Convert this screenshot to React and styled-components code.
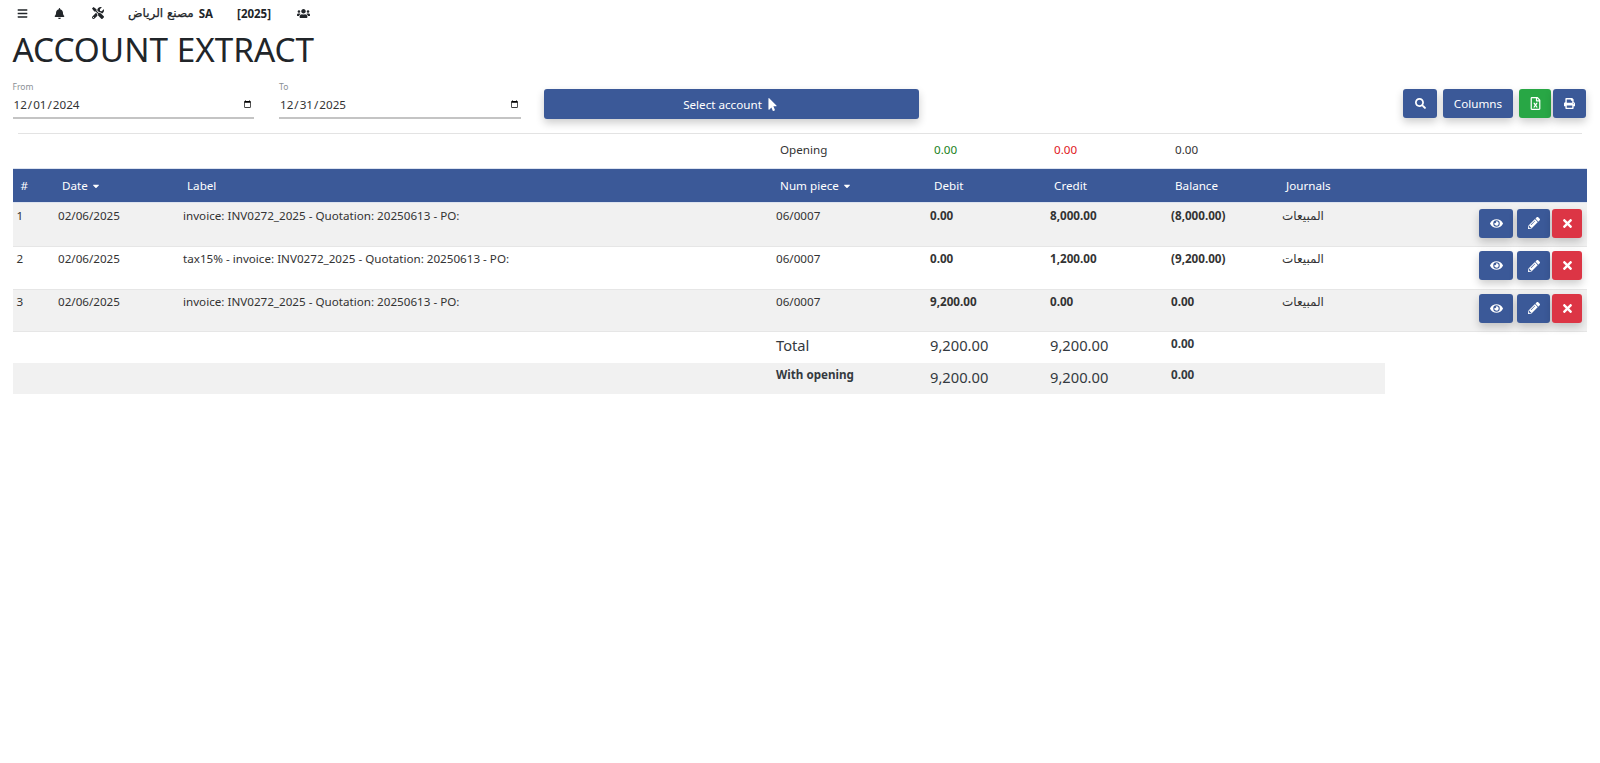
import styled, { createGlobalStyle } from 'styled-components'
import { FaBars, FaBell, FaTools, FaUsers, FaMousePointer, FaSearch, FaRegFileExcel, FaPrint, FaEye, FaPencilAlt, FaTimes, FaCaretDown } from 'react-icons/fa'

const rows = [
  { id: 1, label: 'invoice: INV0272_2025 - Quotation: 20250613 - PO:', debit: '0.00', credit: '8,000.00', balance: '(8,000.00)' },
  { id: 2, label: 'tax15% - invoice: INV0272_2025 - Quotation: 20250613 - PO:', debit: '0.00', credit: '1,200.00', balance: '(9,200.00)' },
  { id: 3, label: 'invoice: INV0272_2025 - Quotation: 20250613 - PO:', debit: '9,200.00', credit: '0.00', balance: '0.00' },
]

const widths = [41.5, 125, 593, 154, 120, 121, 111, 107, 202]

const GlobalStyle = createGlobalStyle`
  html, body { margin: 0; padding: 0; background: #fff; }
  body { font-family: "Noto Sans", "DejaVu Sans", sans-serif; font-size: 11.65px; color: #212529; }
`

const Page = styled.div`
  padding: 0 13px 0 12.5px;
  width: 1600px;
  box-sizing: border-box;
`

const NavBar = styled.nav`
  display: flex;
  align-items: center;
  height: 26px;
  color: #212529;
  font-weight: 700;
`

const NavItem = styled.span`
  display: flex;
  align-items: center;
  margin-left: ${(p) => p.$left}px;
  font-size: ${(p) => p.$size || 11.5}px;
`

const ArabicName = styled.span`
  font-family: "DejaVu Sans", sans-serif;
  font-size: 12px;
  font-weight: 400;
  -webkit-text-stroke: 0.25px #212529;
  margin-right: 5px;
`

const Title = styled.h1`
  margin: 0;
  font-size: 33.3px;
  font-weight: 400;
  line-height: 46px;
  color: #212529;
`

const FilterBar = styled.div`
  display: flex;
  align-items: flex-start;
  height: 52px;
  margin-top: 9px;
`

const DateField = styled.label`
  display: flex;
  flex-direction: column;
  width: 241.5px;
  margin-right: 25px;
`

const DateLabel = styled.span`
  font-size: 8.5px;
  line-height: 12px;
  color: #8a8f94;
`

const DateInput = styled.input`
  border: 0;
  border-bottom: 2px solid #c4c4c4;
  padding: 0 2px 2px 0;
  height: 26px;
  width: 100%;
  box-sizing: border-box;
  font-family: "Noto Sans", sans-serif;
  font-size: 11.65px;
  color: #333;
  background: transparent;
  outline: none;
  &::-webkit-calendar-picker-indicator { margin: 0; padding: 0; width: 9px; height: 9px; }
`

const Button = styled.button`
  display: inline-flex;
  align-items: center;
  justify-content: center;
  gap: 4px;
  height: 29px;
  padding: 0;
  width: ${(p) => p.$width}px;
  margin-left: ${(p) => p.$left || 0}px;
  border: 0;
  border-radius: 3px;
  background: ${(p) => p.$color || '#3b5998'};
  color: #fff;
  font-family: "Noto Sans", sans-serif;
  font-size: 11.65px;
  font-weight: 400;
  box-shadow: 0 4px 8px rgba(0, 0, 0, 0.2);
`

const SelectButton = styled(Button)`
  margin: 8px 0 0 -2px;
  height: 30px;
`

const ToolGroup = styled.div`
  display: flex;
  margin: 8px 1px 0 auto;
`

const Rule = styled.hr`
  border: 0;
  border-top: 1px solid #e3e3e3;
  margin: 0 5px;
`

const Table = styled.table`
  border-collapse: collapse;
  table-layout: fixed;
  width: 1574.5px;
  font-size: 11.65px;
`

const OpenCell = styled.td`
  height: 34px;
  padding: 0 0 2px 8px;
  box-sizing: border-box;
  color: ${(p) => p.$color || '#333'};
`

const Head = styled.th`
  height: 33px;
  padding: 0 0 0 8px;
  background: #3b5998;
  color: #fff;
  font-weight: 400;
  text-align: left;
  border-top: 1px solid #dde3ef;
  border-bottom: 1px solid #dde3ef;
  svg { font-size: 10px; vertical-align: -1px; }
`

const Cell = styled.td`
  height: 42.7px;
  padding: 2px 4px 0;
  box-sizing: border-box;
  vertical-align: top;
  line-height: 20px;
  color: #333;
  font-weight: ${(p) => (p.$bold ? 700 : 400)};
`

const ArabicCell = styled(Cell)`
  font-family: "DejaVu Sans", sans-serif;
  font-size: 12px;
`

const Actions = styled.div`
  display: flex;
  justify-content: flex-end;
  gap: 4px;
  margin: 2px 1px 0 0;
`

const Row = styled.tr`
  background: ${(p) => (p.$shade ? '#f1f1f1' : '#fff')};
  border-bottom: 1px solid #e6e6e6;
  &:first-child td { height: 44.5px; padding-top: 3px; }
  &:first-child ${Actions} { margin-top: 3px; }
`

const CloseAction = styled(Button)`
  margin-left: -2px;
`

const FootRow = styled.tr`
  background: ${(p) => (p.$shade ? '#f1f1f1' : 'transparent')};
`

const FootCell = styled.td`
  height: 31px;
  padding: 0 4px ${(p) => (p.$small ? 0 : p.$low ? 3 : 5)}px;
  box-sizing: border-box;
  vertical-align: ${(p) => (p.$small ? 'top' : 'middle')};
  font-size: ${(p) => (p.$small ? '11.65px' : '14.7px')};
  font-weight: ${(p) => (p.$small ? 700 : 400)};
  line-height: ${(p) => (p.$small ? '24px' : '20px')};
  color: #343a40;
`

const Blank = styled.td`
  background: #fff;
`

function ActionButtons() {
  return (
    <Actions>
      <Button $width={34}><FaEye size={13} /></Button>
      <Button $width={33}><FaPencilAlt size={12} /></Button>
      <CloseAction $width={30} $color="#dc3545"><FaTimes size={13} /></CloseAction>
    </Actions>
  )
}

export default function App() {
  return (
    <Page>
      <GlobalStyle />
      <NavBar>
        <NavItem $left={4.5} $size={11}><FaBars /></NavItem>
        <NavItem $left={25.5} $size={11}><FaBell /></NavItem>
        <NavItem $left={27.5} $size={12}><FaTools /></NavItem>
        <NavItem $left={24}><ArabicName>مصنع الرياض</ArabicName>SA</NavItem>
        <NavItem $left={24}>[2025]</NavItem>
        <NavItem $left={26} $size={13}><FaUsers /></NavItem>
      </NavBar>
      <Title>ACCOUNT EXTRACT</Title>
      <FilterBar>
        <DateField>
          <DateLabel>From</DateLabel>
          <DateInput type="date" defaultValue="2024-12-01" />
        </DateField>
        <DateField>
          <DateLabel>To</DateLabel>
          <DateInput type="date" defaultValue="2025-12-31" />
        </DateField>
        <SelectButton $width={375}>Select account <FaMousePointer size={13} /></SelectButton>
        <ToolGroup>
          <Button $width={34}><FaSearch size={11} /></Button>
          <Button $width={70} $left={6}>Columns</Button>
          <Button $width={32} $left={6} $color="#28a745"><FaRegFileExcel size={13} /></Button>
          <Button $width={33} $left={2}><FaPrint size={11} /></Button>
        </ToolGroup>
      </FilterBar>
      <Rule />
      <Table>
        <colgroup>
          {widths.map((w, i) => <col key={i} style={{ width: w }} />)}
        </colgroup>
        <thead>
          <tr>
            <OpenCell colSpan={3} />
            <OpenCell>Opening</OpenCell>
            <OpenCell $color="#1a7f1a">0.00</OpenCell>
            <OpenCell $color="#e0161b">0.00</OpenCell>
            <OpenCell>0.00</OpenCell>
            <OpenCell colSpan={2} />
          </tr>
          <tr>
            <Head>#</Head>
            <Head>Date <FaCaretDown /></Head>
            <Head>Label</Head>
            <Head>Num piece <FaCaretDown /></Head>
            <Head>Debit</Head>
            <Head>Credit</Head>
            <Head>Balance</Head>
            <Head>Journals</Head>
            <Head />
          </tr>
        </thead>
        <tbody>
          {rows.map((r) => (
            <Row key={r.id} $shade={r.id % 2 === 1}>
              <Cell>{r.id}</Cell>
              <Cell>02/06/2025</Cell>
              <Cell>{r.label}</Cell>
              <Cell>06/0007</Cell>
              <Cell $bold>{r.debit}</Cell>
              <Cell $bold>{r.credit}</Cell>
              <Cell $bold>{r.balance}</Cell>
              <ArabicCell>المبيعات</ArabicCell>
              <Cell><ActionButtons /></Cell>
            </Row>
          ))}
          <FootRow>
            <FootCell colSpan={3} />
            <FootCell>Total</FootCell>
            <FootCell>9,200.00</FootCell>
            <FootCell>9,200.00</FootCell>
            <FootCell $small>0.00</FootCell>
            <FootCell />
            <Blank />
          </FootRow>
          <FootRow $shade>
            <FootCell colSpan={3} />
            <FootCell $small>With opening</FootCell>
            <FootCell $low>9,200.00</FootCell>
            <FootCell $low>9,200.00</FootCell>
            <FootCell $small>0.00</FootCell>
            <FootCell />
            <Blank />
          </FootRow>
        </tbody>
      </Table>
    </Page>
  )
}
